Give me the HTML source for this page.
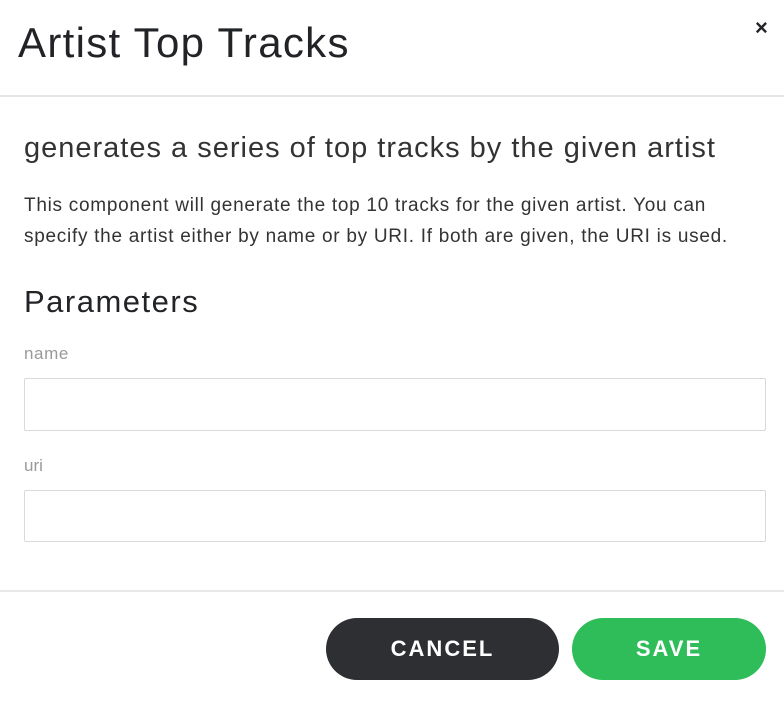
<!DOCTYPE html>
<html><head><style>
body{margin:0;width:784px;height:706px;background:#fff;font-family:"Liberation Sans",sans-serif;color:#222326;position:relative;overflow:hidden}
.a{position:absolute;margin:0;white-space:nowrap}
.inp{position:absolute;left:24px;width:740px;border:1px solid #d9d9d9;border-radius:2px;background:#fff}
.btn{position:absolute;top:618px;height:62px;border-radius:31px;color:#fff;font-weight:bold;font-size:22px;letter-spacing:2px;text-align:center;line-height:62px}
</style></head><body>
<div class="a" style="left:18px;top:19px;font-size:42px;letter-spacing:1.3px;color:#222326">Artist Top Tracks</div>
<div class="a" style="left:755px;top:15px;font-size:22px;font-weight:bold">×</div>
<div style="position:absolute;left:0;top:95px;width:784px;height:2px;background:#e5e5e5"></div>
<div class="a" style="left:24px;top:132px;font-size:29px;letter-spacing:1px;color:#333">generates a series of top tracks by the given artist</div>
<div class="a" style="left:24px;top:190px;font-size:19px;letter-spacing:0.72px;line-height:31px;color:#333">This component will generate the top 10 tracks for the given artist. You can<br>specify the artist either by name or by URI. If both are given, the URI is used.</div>
<div class="a" style="left:24px;top:284px;font-size:31px;letter-spacing:1.5px;color:#222326">Parameters</div>
<div class="a" style="left:24px;top:344px;font-size:17px;letter-spacing:0.6px;color:#999">name</div>
<div class="inp" style="top:378px;height:51px"></div>
<div class="a" style="left:24px;top:456px;font-size:17px;color:#999">uri</div>
<div class="inp" style="top:490px;height:50px"></div>
<div style="position:absolute;left:0;top:590px;width:784px;height:2px;background:#e8e8e8"></div>
<div class="btn" style="left:326px;width:233px;background:#2e2f33">CANCEL</div>
<div class="btn" style="left:572px;width:194px;background:#2ebd59">SAVE</div>
</body></html>
